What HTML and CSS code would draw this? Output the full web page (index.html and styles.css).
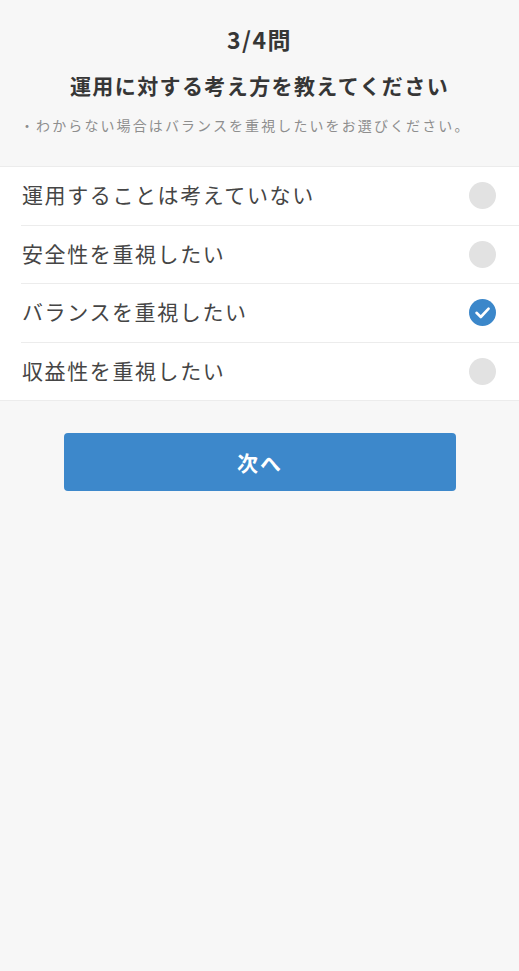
FILE: index.html
```html
<!DOCTYPE html>
<html lang="ja">
<head>
    <meta charset="UTF-8">
    <meta name="viewport" content="width=device-width, initial-scale=1.0">
    <title>3/4問</title>
    <link rel="stylesheet" href="styles.css">
</head>
<body>
    <div class="question-head">
        <h1 class="step">3/4問</h1>
        <h2 class="question">運用に対する考え方を教えてください</h2>
        <p class="note">・わからない場合はバランスを重視したいをお選びください。</p>
    </div>

    <ul class="choices">
        <li class="choice">
            <span class="label">運用することは考えていない</span>
            <span class="radio"></span>
        </li>
        <li class="choice">
            <span class="label">安全性を重視したい</span>
            <span class="radio"></span>
        </li>
        <li class="choice">
            <span class="label">バランスを重視したい</span>
            <span class="radio checked">
                <svg width="27" height="27" viewBox="0 0 27 27">
                    <path d="M7.5 13.8 L11.8 18 L19.6 9.6" fill="none" stroke="#fff" stroke-width="2.6" stroke-linecap="round" stroke-linejoin="round"/>
                </svg>
            </span>
        </li>
        <li class="choice">
            <span class="label">収益性を重視したい</span>
            <span class="radio"></span>
        </li>
    </ul>

    <div class="actions">
        <button class="next-button" type="button">次へ</button>
    </div>
</body>
</html>
```

FILE: styles.css
```css
body {
    margin: 0;
    background-color: #f7f7f7;
    font-family: "Noto Sans CJK JP", "Noto Sans", sans-serif;
    color: #3d3d3d;
}
.question-head {
    padding: 23px 20px 0;
    height: 140px;
    box-sizing: border-box;
}
.step {
    margin: 0;
    text-align: center;
    font-size: 23px;
    line-height: 32px;
    letter-spacing: 1.5px;
    font-weight: bold;
    color: #363636;
}
.question {
    margin: 14px 0 0;
    text-align: center;
    font-size: 21px;
    line-height: 32px;
    letter-spacing: 1.4px;
    font-weight: bold;
    color: #363636;
}
.note {
    margin: 14px 0 0;
    font-size: 14px;
    line-height: 20px;
    letter-spacing: 2.1px;
    color: #8e8e8e;
}
.choices {
    list-style: none;
    margin: 26px 0 0;
    padding: 0 0 0 21px;
    background-color: #ffffff;
    border-top: 1px solid #ececec;
    border-bottom: 1px solid #ececec;
}
.choice {
    display: flex;
    align-items: center;
    justify-content: space-between;
    height: 57.5px;
    padding-right: 23px;
    border-bottom: 1px solid #ececec;
}
.choice:last-child {
    border-bottom: none;
}
.label {
    font-size: 21px;
    letter-spacing: 1.6px;
    color: #454545;
    padding-left: 1px;
    margin-top: -3px;
}
.radio {
    width: 27px;
    height: 27px;
    border-radius: 50%;
    background-color: #e2e2e2;
    display: flex;
}
.radio.checked {
    background-color: #3b87ca;
}
.actions {
    padding: 32px 63px 0 64px;
}
.next-button {
    display: block;
    width: 100%;
    height: 58px;
    border: none;
    border-radius: 4px;
    background-color: #3d88cb;
    color: #ffffff;
    font-family: "Noto Sans CJK JP", sans-serif;
    font-size: 21px;
    letter-spacing: 2px;
    font-weight: bold;
}
```
